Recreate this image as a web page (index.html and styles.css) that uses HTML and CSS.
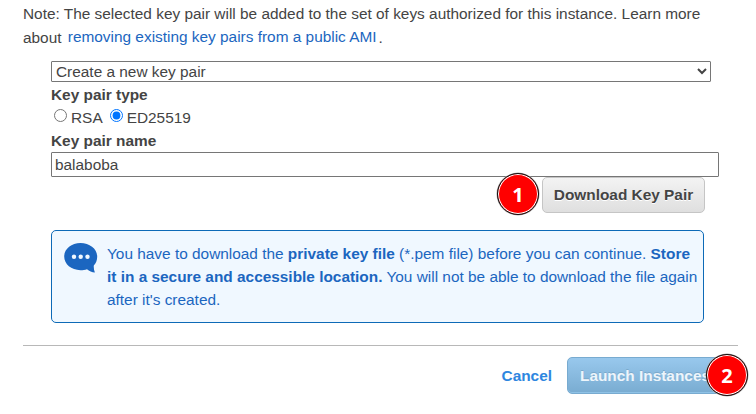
FILE: index.html
```html
<!DOCTYPE html>
<html lang="en">
<head>
<meta charset="utf-8">
<title>Key pair</title>
<link rel="stylesheet" href="styles.css">
</head>
<body>
<main class="dialog">
  <div class="note">
    <div class="note-line">Note: The selected key pair will be added to the set of keys authorized for this instance. Learn more</div>
    <div class="note-line">about <a class="note-link" href="#">removing existing key pairs from a public AMI</a>.</div>
  </div>
  <form class="form">
    <select class="select"><option>Create a new key pair</option></select>
    <div class="label">Key pair type</div>
    <div class="radios">
      <label class="choice"><input type="radio" name="type"><span>RSA</span></label>
      <label class="choice"><input type="radio" name="type" checked><span>ED25519</span></label>
    </div>
    <label class="label" for="name">Key pair name</label>
    <input class="input" id="name" type="text" value="balaboba">
    <div class="download-row">
      <button class="btn btn-download" type="button">Download Key Pair<span class="badge badge-one">1</span></button>
    </div>
    <div class="alert">
      <svg class="bubble" width="34" height="31" viewBox="0 0 34 31">
        <path d="M16.500 0C7.300 0 .2 5.900 .2 13.600S7.300 27.200 16.500 27.200c2.300 0 4.600-.3 6.500-1 2.300 1.900 4.900 3 7.900 3.400-.9-2.100-1.300-4.600-1.100-7 2.100-2.300 3.400-5.300 3.400-8.900C33.200 5.900 25.700 0 16.500 0z" fill="#1b66c0"/>
        <g fill="#f0f8ff"><circle cx="10" cy="13.700" r="2.200"/><circle cx="16.700" cy="13.700" r="2.200"/><circle cx="23.500" cy="13.700" r="2.200"/></g>
      </svg>
      <p class="alert-text">You have to download the <b>private key file</b> (*.pem file) before you can continue. <b>Store<br>it in a secure and accessible location.</b> You will not be able to download the file again<br>after it's created.</p>
    </div>
  </form>
  <footer class="footer">
    <a class="cancel" href="#">Cancel</a>
    <button class="btn btn-launch" type="button">Launch Instances<span class="badge badge-two">2</span></button>
  </footer>
</main>
</body>
</html>
```
FILE: styles.css
```css
* { box-sizing: border-box; }
body {
  margin: 0;
  min-height: 414px;
  background: #fff;
  color: #444;
  font: 15.4px/23px "Liberation Sans", Arial, sans-serif;
  overflow: hidden;
}
a { text-decoration: none; }
.dialog { padding: 2px 18px 0 23px; }
.note { height: 59px; white-space: nowrap; }
.note-line + .note-line { margin-top: 1px; }
.note-link { color: #1b66c0; margin: 0 2px; position: relative; top: -1px; }
.form { padding-left: 28px; }
.select {
  display: block;
  width: 660px;
  height: 21px;
  padding: 0;
  border: 1px solid #767676;
  border-radius: 1px;
  background: #fff;
  color: #444;
  font: 15.4px "Liberation Sans", Arial, sans-serif;
}
.label { display: block; height: 23px; line-height: 25px; font-weight: bold; }
.radios { display: flex; gap: 7px; height: 23px; padding-left: 3px; }
.choice { display: flex; line-height: 25px; }
.choice input { width: 13px; height: 13px; margin: 4px 4px 0 0; }
.input {
  display: block;
  width: 668px;
  height: 25px;
  margin-top: 1px;
  padding: 1px 3px;
  border: 1px solid #767676;
  border-radius: 1px;
  color: #444;
  font: 15.4px "Liberation Sans", Arial, sans-serif;
}
.download-row { display: flex; justify-content: flex-end; padding-right: 33px; }
.btn {
  position: relative;
  padding: 0;
  border-radius: 5px;
  font: bold 15.4px "Liberation Sans", Arial, sans-serif;
  white-space: nowrap;
}
.btn-download {
  width: 163px;
  height: 36px;
  border: 1px solid #c5c5c5;
  background: linear-gradient(#f3f3f3, #dfdfdf);
  color: #444;
  text-shadow: 0 1px 0 #fff;
}
.alert {
  display: flex;
  width: 653px;
  height: 93px;
  margin-top: 17px;
  padding: 12px 0 0 12px;
  border: 1px solid #0d6ab7;
  border-radius: 5px;
  background: #f0f8ff;
  color: #1b66c0;
}
.bubble { flex: none; }
.alert-text { margin: -1px 0 0 9px; white-space: nowrap; }
.footer {
  display: flex;
  align-items: center;
  justify-content: flex-end;
  gap: 15px;
  margin-top: 22px;
  padding: 11px 16px 0 0;
  border-top: 1px solid #b8b8b8;
}
.cancel { color: #2e86e0; font-weight: bold; }
.btn-launch {
  width: 155px;
  height: 37px;
  padding-left: 12px;
  border: 1px solid #78abd0;
  background: linear-gradient(#98c8ed, #79acd1);
  box-shadow: inset 0 -1px 0 #8fc2e6;
  color: #edf5fb;
  text-align: left;
  text-shadow: 0 -1px 0 #7aa9cb;
}
.badge {
  position: absolute;
  width: 42px;
  height: 42px;
  border: 1px solid #111;
  border-radius: 50%;
  background: #f00;
  box-shadow: inset 0 0 0 1px #fff, 0 0 0 .5px #aaa;
  color: #fff;
  font: bold 20px/41px "Noto Sans", "Open Sans", sans-serif;
  text-align: center;
  text-shadow: none;
}
.badge-one { left: -46px; top: -5px; }
.badge-two { left: 138px; top: -4px; }
```
